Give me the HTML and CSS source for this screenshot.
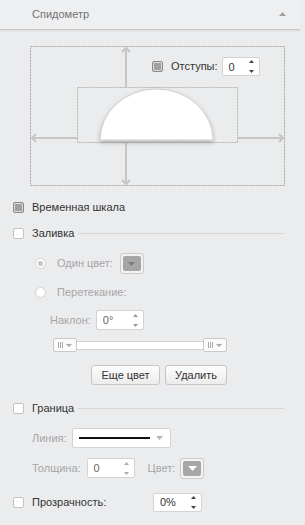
FILE: index.html
```html
<!DOCTYPE html>
<html>
<head>
<meta charset="utf-8">
<link rel="stylesheet" href="styles.css">
</head>
<body>
<div class="panel">
  <div class="header">
    <span class="title">Спидометр</span>
    <svg class="caret" width="7" height="4" viewBox="0 0 7 4"><polygon points="0,4 3.5,0 7,4" fill="#a0a0a0"/></svg>
  </div>

  <div class="body">
    <div class="diagram">
      <svg class="canvas" width="255" height="141" viewBox="0 0 255 141">
        <defs>
          <filter id="sh" x="-20%" y="-30%" width="140%" height="180%">
            <feDropShadow dx="0" dy="2" stdDeviation="2" flood-color="#000" flood-opacity="0.28"/>
          </filter>
        </defs>
        <rect x="0.5" y="0.5" width="254" height="139" fill="none" stroke="#a9a9a9" stroke-dasharray="2 1"/>
        <rect x="47.5" y="41.5" width="160" height="55" fill="none" stroke="#b4b4b4" stroke-dasharray="2 1"/>
        <g stroke="#c6c6c6" stroke-width="2" fill="none">
          <line x1="96" y1="2" x2="96" y2="41"/>
          <polyline points="92,6 96,2 100,6"/>
          <line x1="96" y1="97" x2="96" y2="138"/>
          <polyline points="92,134 96,138 100,134"/>
          <line x1="2" y1="92" x2="47" y2="92"/>
          <polyline points="6,88 2,92 6,96"/>
          <line x1="208" y1="92" x2="253" y2="92"/>
          <polyline points="249,88 253,92 249,96"/>
        </g>
        <path d="M70 94 A56.5 51 0 0 1 183 94 Z" fill="#fff" stroke="#cfcfcf" filter="url(#sh)"/>
      </svg>
      <div class="margins">
        <span class="cb cb-mixed"></span>
        <span class="label">Отступы:</span>
        <div class="spin spin-margin">
          <span class="val">0</span>
          <svg class="arr" width="5" height="13" viewBox="0 0 5 13"><polygon points="0,3 2.5,0 5,3" fill="#444"/><polygon points="0,10 5,10 2.5,13" fill="#444"/></svg>
        </div>
      </div>
    </div>

    <div class="row r-timeline">
      <span class="cb cb-mixed"></span>
      <span class="label">Временная шкала</span>
    </div>

    <div class="row r-fill">
      <span class="cb"></span>
      <span class="label">Заливка</span>
      <span class="sep"></span>
    </div>

    <div class="row r-solid">
      <span class="radio radio-on"></span>
      <span class="label dis">Один цвет:</span>
      <span class="color-btn"><span class="swatch"><svg width="7" height="4" viewBox="0 0 7 4"><polygon points="0,0 7,0 3.5,4" fill="#7a7a7a"/></svg></span></span>
    </div>

    <div class="row r-grad">
      <span class="radio"></span>
      <span class="label dis">Перетекание:</span>
    </div>

    <div class="row r-tilt">
      <span class="label dis">Наклон:</span>
      <div class="spin spin-tilt dis-spin">
        <span class="val">0°</span>
        <svg class="arr" width="5" height="13" viewBox="0 0 5 13"><polygon points="0,3 2.5,0 5,3" fill="#999"/><polygon points="0,10 5,10 2.5,13" fill="#999"/></svg>
      </div>
    </div>

    <div class="row r-slider">
      <span class="thumb"><svg width="16" height="6" viewBox="0 0 16 6"><g stroke="#a8a8a8" stroke-width="1"><line x1="1.5" y1="0" x2="1.5" y2="6"/><line x1="3.5" y1="0" x2="3.5" y2="6"/><line x1="5.5" y1="0" x2="5.5" y2="6"/></g><polygon points="9,2 15,2 12,5" fill="#a8a8a8"/></svg></span>
      <span class="track"></span>
      <span class="thumb"><svg width="16" height="6" viewBox="0 0 16 6"><g stroke="#a8a8a8" stroke-width="1"><line x1="1.5" y1="0" x2="1.5" y2="6"/><line x1="3.5" y1="0" x2="3.5" y2="6"/><line x1="5.5" y1="0" x2="5.5" y2="6"/></g><polygon points="9,2 15,2 12,5" fill="#a8a8a8"/></svg></span>
    </div>

    <div class="row r-buttons">
      <span class="btn btn-more">Еще цвет</span>
      <span class="btn btn-del">Удалить</span>
    </div>

    <div class="row r-border">
      <span class="cb"></span>
      <span class="label">Граница</span>
      <span class="sep"></span>
    </div>

    <div class="row r-line">
      <span class="label dis">Линия:</span>
      <div class="dropdown">
        <span class="stroke"></span>
        <svg width="7" height="4" viewBox="0 0 7 4"><polygon points="0,0 7,0 3.5,4" fill="#b5b5b5"/></svg>
      </div>
    </div>

    <div class="row r-thick">
      <span class="label dis">Толщина:</span>
      <div class="spin spin-thick dis-spin">
        <span class="val">0</span>
        <svg class="arr" width="5" height="13" viewBox="0 0 5 13"><polygon points="0,3 2.5,0 5,3" fill="#aaa"/><polygon points="0,10 5,10 2.5,13" fill="#aaa"/></svg>
      </div>
      <span class="label dis lbl-color">Цвет:</span>
      <span class="color-btn color-btn-b"><span class="swatch"><svg width="9" height="5" viewBox="0 0 9 5"><polygon points="0,0 9,0 4.5,5" fill="#fff"/></svg></span></span>
    </div>

    <div class="row r-opacity">
      <span class="cb"></span>
      <span class="label lbl-opacity">Прозрачность:</span>
      <div class="spin spin-opacity">
        <span class="val">0%</span>
        <svg class="arr" width="5" height="13" viewBox="0 0 5 13"><polygon points="0,3 2.5,0 5,3" fill="#444"/><polygon points="0,10 5,10 2.5,13" fill="#444"/></svg>
      </div>
    </div>
  </div>
</div>
</body>
</html>
```

FILE: styles.css
```css
* { box-sizing: border-box; }

html, body {
  margin: 0;
  padding: 0;
  background: #ebecee;
}

body {
  font-family: "Liberation Sans", Arial, sans-serif;
  font-size: 11px;
  color: #333;
  width: 305px;
  height: 525px;
  overflow: hidden;
}

.panel {
  display: flex;
  flex-direction: column;
}

.header {
  height: 30px;
  display: flex;
  align-items: center;
  padding: 0 13px 1px 32px;
  background: #eeeff0;
  border-bottom: 1px solid #c9c9c9;
  box-shadow: 0 1px 1px rgba(0, 0, 0, 0.06);
  margin-right: 5px;
}

.title {
  flex: 1;
  color: #737373;
  font-size: 11px;
}

.caret {
  margin-right: 1px;
}

.body {
  display: flex;
  flex-direction: column;
  padding: 0 21px 0 13px;
}

.diagram {
  position: relative;
  width: 255px;
  height: 141px;
  margin: 16px 0 0 17px;
}

.canvas {
  display: block;
}

.margins {
  position: absolute;
  left: 122px;
  top: 11px;
  display: flex;
  align-items: center;
  height: 19px;
}

.margins .label {
  margin-left: 8px;
  margin-right: 4px;
}

.row {
  display: flex;
  align-items: center;
  height: 20px;
}

.label {
  white-space: nowrap;
  line-height: 13px;
}

.dis {
  color: #a6a6a6;
}

.cb {
  width: 11px;
  height: 11px;
  flex: none;
  background: #fff;
  border: 1px solid #c2c2c2;
  border-radius: 2px;
}

.cb-mixed {
  background: #a0a0a0;
  border: 1px solid #8a8a8a;
  box-shadow: inset 0 0 0 1px #d9d9d9;
}

.row > .cb + .label {
  margin-left: 8px;
}

.sep {
  flex: 1;
  height: 1px;
  background: #d6d6d6;
  margin-left: 4px;
}

.r-timeline { margin-top: 10px; }
.r-fill { margin-top: 6px; }

.radio {
  width: 11px;
  height: 11px;
  flex: none;
  border-radius: 50%;
  background: #fff;
  border: 1px solid #d2d2d2;
}

.radio-on {
  background: radial-gradient(circle, #c9c9c9 0 2.5px, #fff 3px);
}

.r-solid {
  margin-top: 10px;
  height: 21px;
  padding-left: 22px;
}

.r-solid .label,
.r-grad .label {
  margin-left: 11px;
}

.color-btn {
  width: 24px;
  height: 21px;
  margin-left: 7px;
  border: 1px solid #cbcbcb;
  border-radius: 3px;
  background: #f3f3f3;
  padding: 2px;
  display: flex;
}

.swatch {
  flex: 1;
  background: #a6a6a6;
  border-radius: 2px;
  display: flex;
  align-items: center;
  justify-content: center;
}

.r-grad {
  margin-top: 8px;
  padding-left: 22px;
}

.r-tilt {
  margin-top: 8px;
  padding-left: 37px;
}

.spin {
  display: flex;
  align-items: center;
  height: 20px;
  background: #fff;
  border: 1px solid #d3d3d3;
  border-radius: 2px;
  padding: 0 5px 0 6px;
}

.spin .val {
  flex: 1;
  color: #333;
}

.dis-spin .val {
  color: #666;
}

.spin-margin {
  width: 38px;
  height: 19px;
}

.spin-tilt {
  width: 48px;
  margin-left: 5px;
}

.r-slider {
  margin-top: 8px;
  height: 14px;
  padding-left: 40px;
}

.thumb {
  width: 24px;
  height: 14px;
  flex: none;
  background: #fafafa;
  border: 1px solid #c9c9c9;
  border-radius: 2px;
  display: flex;
  align-items: center;
  justify-content: center;
}

.track {
  width: 126px;
  height: 9px;
  background: #fff;
  border-top: 1px solid #d0d0d0;
  border-bottom: 1px solid #d0d0d0;
}

.r-buttons {
  margin-top: 13px;
  padding-left: 78px;
  gap: 5px;
}

.btn {
  height: 20px;
  display: flex;
  align-items: center;
  justify-content: center;
  border: 1px solid #c6c6c6;
  border-radius: 3px;
  background: linear-gradient(#fdfdfd, #ececec);
  color: #333;
  font-size: 11px;
}

.btn-more { width: 69px; }
.btn-del { width: 62px; }

.r-border { margin-top: 13px; }

.r-line {
  margin-top: 10px;
  padding-left: 19px;
}

.dropdown {
  width: 99px;
  height: 20px;
  margin-left: 5px;
  background: #fff;
  border: 1px solid #d3d3d3;
  border-radius: 2px;
  display: flex;
  align-items: center;
  padding: 0 7px 0 6px;
}

.stroke {
  width: 71px;
  height: 2px;
  background: #111;
  margin-right: auto;
}

.r-thick {
  margin-top: 10px;
  padding-left: 19px;
}

.spin-thick {
  width: 48px;
  margin-left: 6px;
}

.lbl-color {
  margin-left: 13px;
}

.color-btn-b {
  margin-left: 5px;
}

.r-opacity {
  margin-top: 14px;
}

.lbl-opacity {
  flex: 1;
}

.spin-opacity {
  width: 49px;
  height: 19px;
  margin-right: 82px;
}
```
